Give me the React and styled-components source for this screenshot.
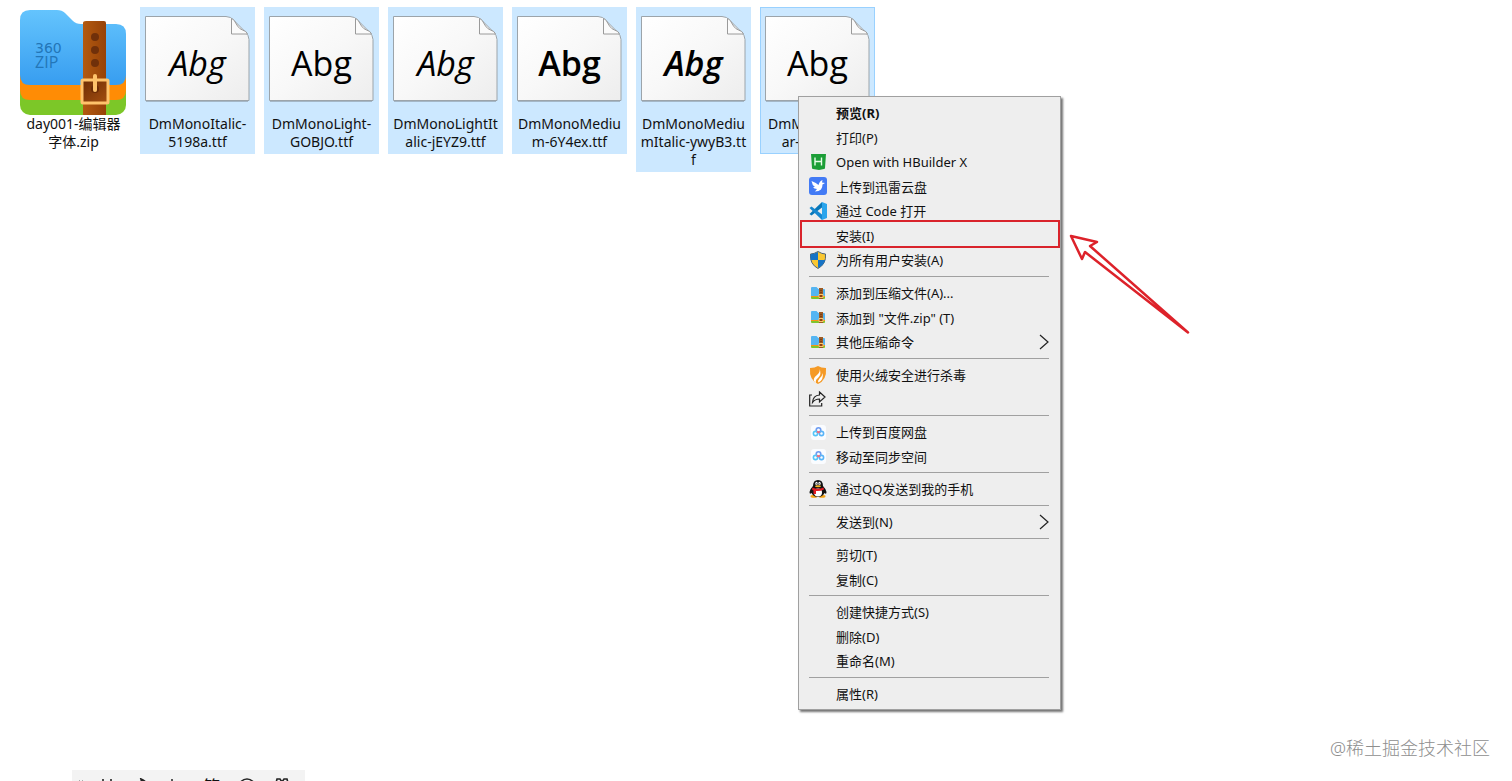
import React from 'react'
import styled, { createGlobalStyle } from 'styled-components';

const GlobalStyle = createGlobalStyle`
    * {
        box-sizing: border-box;
    }

    body {
        margin: 0;
        overflow: hidden;
        background: #fff;
        color: #111;
        font-family: "Noto Sans", "Noto Sans CJK SC", sans-serif;
    }

    button {
        padding: 0;
        border: none;
        background: none;
        color: inherit;
        font: inherit;
    }
`;

const Desktop = styled.main`
    position: relative;
    min-height: 100vh;
    padding: 7px 16px;
    overflow: hidden;
`;

const FileGrid = styled.div`
    display: flex;
    flex-wrap: wrap;
    align-items: flex-start;
    gap: 9px;
`;

const FileTile = styled.button`
    display: flex;
    flex-direction: column;
    align-items: center;
    width: 115px;
    padding-bottom: 3px;
    background: ${({ $selected }) => ($selected ? '#cce8ff' : 'transparent')};
    box-shadow: ${({ $focused }) => ($focused ? 'inset 0 0 0 1px #99d1ff' : 'none')};
`;

const Thumb = styled.span`
    position: relative;
    display: flex;
    justify-content: center;
    width: 107px;
    height: 108px;
    padding-top: ${({ $top }) => $top || 0}px;

    svg {
        display: block;
        flex: none;
    }
`;

const FileName = styled.span`
    font-size: 14px;
    line-height: 18px;
    text-align: center;
    white-space: nowrap;
`;

const Sample = styled.span`
    position: absolute;
    top: 36px;
    left: 0;
    width: 100%;
    text-align: center;
    color: #000;
    font-family: "Open Sans", "Noto Sans", sans-serif;
    font-size: 34px;
    line-height: 40px;
    font-weight: ${({ $weight }) => $weight};
    font-style: ${({ $italic }) => ($italic ? 'italic' : 'normal')};
`;

const Menu = styled.div`
    position: absolute;
    top: 96px;
    left: 798px;
    width: 263px;
    padding: 3px 1px;
    border: 1px solid #a0a0a0;
    background: #eee;
    box-shadow: 2px 2px 2px rgba(0, 0, 0, 0.55);
`;

const MenuGroup = styled.div`
    & + &::before {
        content: "";
        display: block;
        height: 1px;
        margin: 4px 10px 3px 9px;
        background: #a0a0a0;
    }
`;

const MenuItem = styled.button`
    position: relative;
    display: flex;
    align-items: center;
    width: 100%;
    height: 25px;
    padding: 0 10px 0 9px;
    font-size: 13px;
    font-weight: ${({ $bold }) => ($bold ? 700 : 400)};
    text-align: left;

    &:nth-child(even) {
        height: 24px;
    }

    &:hover {
        background: #fff;
    }
`;

const MenuIcon = styled.span`
    flex: none;
    display: flex;
    width: 18px;
    height: 18px;
    margin-right: 9px;
`;

const MenuLabel = styled.span`
    flex: 1;
    white-space: nowrap;
`;

const Highlight = styled.span`
    position: absolute;
    inset: -3px -1px -1px 0;
    border: 2px solid #d9232b;
    pointer-events: none;
`;

const Arrow = styled.svg`
    position: absolute;
    top: 230px;
    left: 1064px;
    pointer-events: none;
`;

const Watermark = styled.div`
    position: absolute;
    right: 22px;
    bottom: 20px;
    color: #8e8e8e;
    font-size: 18px;
    line-height: 26px;
    font-weight: 300;
`;

const InputBar = styled.div`
    position: absolute;
    left: 72px;
    bottom: -23px;
    display: flex;
    align-items: center;
    width: 233px;
    height: 34px;
    padding-left: 7px;
    background: #f3f3f3;
`;

const BarButton = styled.button`
    display: flex;
    justify-content: center;
    width: 35px;
    font-size: 18px;
    line-height: 22px;

    &:first-of-type {
        margin-left: 4px;
    }
`;

const ZipArt = () => (
    <svg width="107" height="106" viewBox="0 0 107 106" aria-hidden="true">
        <defs>
            <linearGradient id="zip-blue" x1="0" y1="0" x2="0" y2="1">
                <stop offset="0" stopColor="#64c4fd" />
                <stop offset="1" stopColor="#379df0" />
            </linearGradient>
            <linearGradient id="zip-belt" x1="0" y1="0" x2="1" y2="0">
                <stop offset="0" stopColor="#b35a10" />
                <stop offset="1" stopColor="#964208" />
            </linearGradient>
            <linearGradient id="zip-hole" x1="0" y1="0" x2="1" y2="1">
                <stop offset="0" stopColor="#6d2c04" />
                <stop offset="1" stopColor="#a54f10" />
            </linearGradient>
        </defs>
        <rect x="0" y="60" width="106" height="45" rx="10" fill="#7cc728" />
        <path d="M0 60h106v20q0 10-10 10H10Q0 90 0 80z" fill="#ff8c05" />
        <path d="M0 10Q0 0 10 0h27q5 0 8 3l8 8q3 3 8 3h35q10 0 10 10v41q0 10-10 10H10Q0 75 0 65z" fill="url(#zip-blue)" />
        <path d="M66 11h18q2 0 2 2v92H63V13q0-2 3-2z" fill="url(#zip-belt)" />
        <circle cx="75" cy="27" r="4" fill="#70300a" />
        <circle cx="75" cy="40" r="4" fill="#70300a" />
        <circle cx="75" cy="53" r="4" fill="#70300a" />
        <rect x="62" y="70" width="26" height="23" rx="1" fill="url(#zip-hole)" stroke="#ffc36b" strokeWidth="3" />
        <circle cx="75" cy="79" r="4" fill="#6b2b05" />
        <path d="M75 66v14" stroke="#ffc36b" strokeWidth="4" strokeLinecap="round" />
        <g fill="#2376b8">
            <text x="15" y="43" fontSize="14" fontFamily="DejaVu Sans, sans-serif">360</text>
            <text x="15" y="58" fontSize="16" fontFamily="Open Sans, sans-serif">ZIP</text>
        </g>
    </svg>
)

const PageArt = ({ id }) => (
    <svg width="107" height="96" viewBox="0 0 107 96" aria-hidden="true">
        <defs>
            <linearGradient id={id} x1="0" y1="0" x2="1" y2="1">
                <stop offset="0" stopColor="#fff" />
                <stop offset="0.5" stopColor="#f8f8f8" />
                <stop offset="1" stopColor="#ededed" />
            </linearGradient>
        </defs>
        <path d="M2 94.500H104" stroke="#8b98a3" opacity="0.6" />
        <path d="M1.500 9.500H82q5 0 8 4l11 11q4 4 4 8v61H1.500z" fill={`url(#${id})`} stroke="#9ca4aa" />
        <path d="M87.500 11.500v15.500h16q-1-3-5-4-3-1-5-4l-3-5q-1-2-3-2.500z" fill="#fbfbfb" stroke="#9a9a9a" />
    </svg>
)

const HBuilderIcon = () => (
    <svg width="18" height="18" viewBox="0 0 18 18">
        <path d="M2 1h15l-1 14q0 1-1 1l-5 1-6-1q-1 0-1-1z" fill="#1c9e37" />
        <path d="M6 4.500v8M12.500 4.500v8M6 8.500h6" stroke="#e8ffe9" strokeWidth="1.400" fill="none" />
    </svg>
)

const ThunderIcon = () => (
    <svg width="18" height="18" viewBox="0 0 18 18">
        <rect width="18" height="18" rx="3" fill="#437bf5" />
        <path d="M2.500 4q5 2 7 4 1-4 4-5l-.5 2.500 3 .5-2.500 1.500q0 3-1.500 5-2 2-6 2l2-2.500q-3 0-4-2h2Q3 8 2.500 4z" fill="#fff" />
    </svg>
)

const CodeIcon = () => (
    <svg width="18" height="18" viewBox="0 0 18 18">
        <path d="M13 0l5 2v14l-5 2z" fill="#2aa5ed" />
        <path d="M13 0v5.500L2.500 13.500.500 12z" fill="#0877b9" />
        <path d="M13 18v-5.500L2.500 4.500.500 6z" fill="#1687cf" />
    </svg>
)

const ShieldIcon = () => (
    <svg width="18" height="18" viewBox="0 0 18 18">
        <path d="M9 .500q4 2.500 7.500 2.500 1 10-7.500 14.500Q.500 13 1.500 3 5 3 9 .500z" fill="#f9c732" stroke="#516475" />
        <path d="M9 1v8H1.700Q1.300 6 1.700 3.300 5.500 3 9 1zM9 9h7.200Q15 14 9 17z" fill="#1673c5" />
    </svg>
)

const FlameIcon = () => (
    <svg width="18" height="18" viewBox="0 0 18 18">
        <path d="M9 0q3 2 8 2 1 12-8 16Q0 14 1 2q5 0 8-2z" fill="#f59a26" />
        <path d="M10.500 3q1 3-2.500 6-4 3-3 6 1 2 2 2-1-3 2-5 4-4 1.500-9zM13.500 7q0 3-3 5.500-2 2-1 4 5.500-3 4-9.500z" fill="#fff" />
    </svg>
)

const ShareIcon = () => (
    <svg width="18" height="18" viewBox="0 0 18 18" fill="none" stroke="#222" strokeWidth="1.200">
        <path d="M3 5H.700v11h12v-3" />
        <path d="M10.500 2l5.500 5-5.500 5V9Q6 9 3.500 12.500 4 5.500 10.500 5z" />
    </svg>
)

const BaiduIcon = () => (
    <svg width="18" height="18" viewBox="0 0 18 18" fill="none" strokeWidth="1.600">
        <rect x="2" y="2" width="15" height="15" rx="3" fill="#fafcff" />
        <circle cx="9.500" cy="7" r="2.300" stroke="#6c9bf0" />
        <circle cx="6.500" cy="10.500" r="2.100" stroke="#55c5f8" />
        <circle cx="12.500" cy="10.500" r="2.100" stroke="#58b4f8" />
        <path d="M8 8.500l1.500 1 1.500-1" stroke="#ef6c7e" />
    </svg>
)

const PenguinIcon = () => (
    <svg width="18" height="18" viewBox="0 0 18 18">
        <ellipse cx="5" cy="16.300" rx="3.500" ry="1.500" fill="#f5a313" />
        <ellipse cx="13" cy="16.300" rx="3.500" ry="1.500" fill="#f5a313" />
        <path d="M9 0Q4 0 4 6 1 9 .500 12q0 3 2 1 2 4 6.500 4t6.500-4q2 2 2-1Q17 9 14 6q0-6-5-6z" fill="#111" />
        <ellipse cx="9" cy="12.500" rx="4" ry="4" fill="#fff" />
        <ellipse cx="7.500" cy="3.500" rx="1.200" ry="1.700" fill="#fff" />
        <ellipse cx="10.500" cy="3.500" rx="1.200" ry="1.700" fill="#fff" />
        <circle cx="7.800" cy="3.800" r=".6" fill="#111" />
        <circle cx="10.200" cy="3.800" r=".6" fill="#111" />
        <ellipse cx="9" cy="6.300" rx="3" ry="1" fill="#f8b624" />
        <path d="M3.500 7.500Q9 10 14.500 7.500l.5 2q-4 2-8 1.500V14H4.500v-3.500L3 9.500z" fill="#e21c24" />
    </svg>
)

const ZipIcon = () => (
    <svg width="18" height="18" viewBox="0 0 18 18" aria-hidden="true">
        <path d="M2 7h14v7q0 1-1 1H3q-1 0-1-1z" fill="#7fc52c" />
        <path d="M2 7h14v6H2z" fill="#f99318" />
        <path d="M2 4q0-1 1-1h4.500l2 2H15q1 0 1 1v6H2z" fill="#55b5f2" />
        <path d="M10 4h4v11h-4z" fill="#9b5a25" />
        <path d="M10 10.500h4v3h-4z" fill="#8b4310" stroke="#ffc76b" />
        <path d="M12 6v1M12 8v1" stroke="#5b2708" />
    </svg>
)

const Chevron = () => (
    <svg width="10" height="16" viewBox="0 0 10 16" fill="none" stroke="#222" strokeWidth="1.200">
        <path d="M1 1l8 7-8 7" />
    </svg>
)

const files = [
    { lines: ['DmMonoItalic-', '5198a.ttf'], weight: 500, italic: true },
    { lines: ['DmMonoLight-', 'GOBJO.ttf'], weight: 400 },
    { lines: ['DmMonoLightIt', 'alic-jEYZ9.ttf'], weight: 400, italic: true },
    { lines: ['DmMonoMediu', 'm-6Y4ex.ttf'], weight: 600 },
    { lines: ['DmMonoMediu', 'mItalic-ywyB3.tt', 'f'], weight: 600, italic: true },
    { lines: ['DmMonoRegul', 'ar-8XBtf.ttf'], weight: 400, focused: true },
];

const menuGroups = [
    [
        { label: '预览(R)', bold: true },
        { label: '打印(P)' },
        { label: 'Open with HBuilder X', Icon: HBuilderIcon },
        { label: '上传到迅雷云盘', Icon: ThunderIcon },
        { label: '通过 Code 打开', Icon: CodeIcon },
        { label: '安装(I)', highlight: true },
        { label: '为所有用户安装(A)', Icon: ShieldIcon },
    ],
    [
        { label: '添加到压缩文件(A)...', Icon: ZipIcon },
        { label: '添加到 "文件.zip" (T)', Icon: ZipIcon },
        { label: '其他压缩命令', Icon: ZipIcon, submenu: true },
    ],
    [
        { label: '使用火绒安全进行杀毒', Icon: FlameIcon },
        { label: '共享', Icon: ShareIcon },
    ],
    [
        { label: '上传到百度网盘', Icon: BaiduIcon },
        { label: '移动至同步空间', Icon: BaiduIcon },
    ],
    [{ label: '通过QQ发送到我的手机', Icon: PenguinIcon }],
    [{ label: '发送到(N)', submenu: true }],
    [{ label: '剪切(T)' }, { label: '复制(C)' }],
    [{ label: '创建快捷方式(S)' }, { label: '删除(D)' }, { label: '重命名(M)' }],
    [{ label: '属性(R)' }],
];

const Lines = ({ lines }) => (
    <FileName>
        {lines.map((line, i) => (
            <React.Fragment key={line}>
                {i > 0 && <br />}
                {line}
            </React.Fragment>
        ))}
    </FileName>
)

const ContextMenu = () => (
    <Menu role="menu">
        {menuGroups.map((group) => (
            <MenuGroup key={group[0].label} role="group">
                {group.map(({ label, Icon, bold, highlight, submenu }) => (
                    <MenuItem key={label} type="button" role="menuitem" $bold={bold}>
                        <MenuIcon>{Icon && <Icon />}</MenuIcon>
                        <MenuLabel>{label}</MenuLabel>
                        {submenu && <Chevron />}
                        {highlight && <Highlight />}
                    </MenuItem>
                ))}
            </MenuGroup>
        ))}
    </Menu>
)

const InputMethodBar = () => (
    <InputBar>
        <svg width="6" height="16" viewBox="0 0 6 16" fill="#aaa">
            <path d="M0 1h1v2H0zM3 1h1v2H3zM0 6h1v2H0zM3 6h1v2H3z" />
        </svg>
        <BarButton type="button" aria-label="半角">
            <svg width="16" height="18" viewBox="0 0 16 18" fill="none" stroke="#222" strokeWidth="1.600">
                <path d="M4 1v15M12 1v15M4 7h8" />
            </svg>
        </BarButton>
        <BarButton type="button" aria-label="月亮">
            <svg width="16" height="18" viewBox="0 0 16 18" fill="none" stroke="#222" strokeWidth="1.800">
                <path d="M7 1q7 3 6 9-3 6-10 5 7-4 4-14z" />
            </svg>
        </BarButton>
        <BarButton type="button" aria-label="标点">
            <svg width="16" height="18" viewBox="0 0 16 18" fill="none" stroke="#222" strokeWidth="1.600">
                <path d="M2 2h2M9 12q0 4-3 5" />
            </svg>
        </BarButton>
        <BarButton type="button">简</BarButton>
        <BarButton type="button" aria-label="表情">
            <svg width="18" height="18" viewBox="0 0 18 18" fill="none" stroke="#222" strokeWidth="1.600">
                <circle cx="9" cy="9" r="8" />
                <path d="M5 10q4 5 8 0" />
            </svg>
        </BarButton>
        <BarButton type="button" aria-label="设置">
            <svg width="18" height="18" viewBox="0 0 18 18" fill="none" stroke="#222" strokeWidth="1.600">
                <path d="M4 1h3l2 3 2-3h3l1 4 2 4-2 4-1 4H4l-1-4-2-4 2-4z" />
                <circle cx="9" cy="9" r="3" />
            </svg>
        </BarButton>
    </InputBar>
)

export default function App() {
    return (
        <Desktop>
            <GlobalStyle />
            <FileGrid>
                <FileTile type="button">
                    <Thumb $top={3}>
                        <ZipArt />
                    </Thumb>
                    <Lines lines={['day001-编辑器', '字体.zip']} />
                </FileTile>
                {files.map(({ lines, weight, italic, focused }) => (
                    <FileTile key={lines.join('')} type="button" $selected $focused={focused}>
                        <Thumb>
                            <PageArt id={`page-${lines[1].slice(0, 4)}`} />
                            <Sample $weight={weight} $italic={italic}>Abg</Sample>
                        </Thumb>
                        <Lines lines={lines} />
                    </FileTile>
                ))}
            </FileGrid>
            <ContextMenu />
            <Arrow width="130" height="110" viewBox="0 0 130 110" fill="none" stroke="#dd222a" strokeWidth="2.500" strokeLinejoin="round">
                <path d="M7 6l26 6-7 4 98 86.500L21 22l-3 7z" />
            </Arrow>
            <Watermark>@稀土掘金技术社区</Watermark>
            <InputMethodBar />
        </Desktop>
    )
}
